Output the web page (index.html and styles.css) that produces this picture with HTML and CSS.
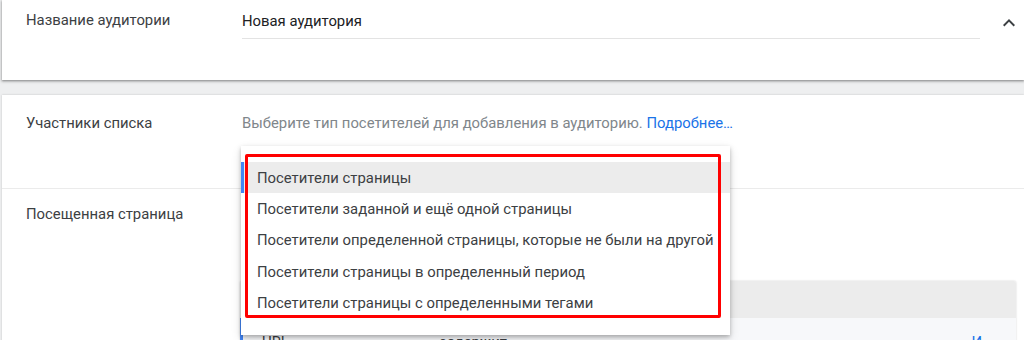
FILE: index.html
```html
<!DOCTYPE html>
<html lang="ru">
<head>
<meta charset="utf-8">
<title>Аудитория</title>
<link rel="stylesheet" href="styles.css">
</head>
<body>
<div class="page">
  <section class="card card-top">
    <div class="row row-name">
      <div class="label">Название аудитории</div>
      <div class="field field-name"><div class="input">Новая аудитория</div></div>
      <div class="chev">
        <svg width="24" height="24" viewBox="0 0 24 24"><path d="M12 8l-6 6 1.41 1.41L12 10.83l4.59 4.58L18 14z" fill="#3c4043"/></svg>
      </div>
    </div>
  </section>
  <section class="card card-main">
    <div class="row row-members">
      <div class="label">Участники списка</div>
      <div class="field">
        <div class="hint">Выберите тип посетителей для добавления в аудиторию. <a class="link">Подробнее…</a></div>
      </div>
    </div>
    <div class="row row-page">
      <div class="label">Посещенная страница</div>
      <div class="field">
        <div class="rule-box">
          <div class="rule-head"></div>
          <div class="rule-body">
            <span class="rule-key">URL</span>
            <span class="rule-caret"></span>
            <span class="rule-op">содержит</span>
            <span class="rule-link">И</span>
          </div>
        </div>
      </div>
    </div>
  </section>
  <ul class="menu">
    <li class="menu-item is-active">Посетители страницы</li>
    <li class="menu-item">Посетители заданной и ещё одной страницы</li>
    <li class="menu-item">Посетители определенной страницы, которые не были на другой</li>
    <li class="menu-item">Посетители страницы в определенный период</li>
    <li class="menu-item">Посетители страницы с определенными тегами</li>
  </ul>
  <div class="annot"></div>
</div>
</body>
</html>
```
FILE: styles.css
```css
* { box-sizing: border-box; }
html, body { margin: 0; padding: 0; }
body {
  background: #eeeff0;
  font-family: Roboto, "Noto Sans", Arial, sans-serif;
  font-size: 14.85px;
  color: #3c4043;
  width: 1024px;
  height: 340px;
  overflow: hidden;
}
.page { position: relative; height: 340px; }

.card {
  background: #fff;
  margin-left: 2px;
}
.card-top {
  height: 80px;
  box-shadow: 0 1px 2px rgba(0,0,0,.35), 0 1px 3px 1px rgba(0,0,0,.12);
}
.card-main {
  margin-top: 15px;
  height: 260px;
  box-shadow: 0 0 2px rgba(0,0,0,.18);
}

.row { display: flex; align-items: flex-start; }
.label {
  width: 240px;
  padding-left: 24px;
  line-height: 20px;
  color: #3c4043;
}

.row-name { padding-top: 10px; }
.field-name {
  width: 738px;
  border-bottom: 1px solid #e3e3e3;
  padding-bottom: 7px;
}
.input {
  line-height: 20px;
  padding-top: 1px;
  color: #202124;
}
.chev { margin-left: 17px; margin-top: 1px; height: 24px; }
.chev svg { display: block; }

.row-members {
  height: 94px;
  padding-top: 18px;
  border-bottom: 1px solid #ebebeb;
}
.hint { line-height: 20px; color: #80868b; }
.link { color: #1a73e8; text-decoration: none; }

.row-page { padding-top: 15px; }
.row-page .field { flex: 1; }
.rule-box {
  margin-top: 77px;
  margin-left: -2px;
  width: 776px;
  border-radius: 2px;
  overflow: hidden;
  box-shadow: 0 0 2px rgba(0,0,0,.2);
}
.rule-head { height: 37px; background: #ececec; }
.rule-body {
  background: #f7f8fa;
  height: 40px;
  border-left: 3px solid #4285f4;
  padding: 14px 0 0 19px;
  display: flex;
  align-items: flex-start;
  line-height: 20px;
  color: #3c4043;
}
.rule-key { width: 124px; }
.rule-caret {
  width: 0; height: 0; margin-top: 8px;
  border-left: 5px solid transparent;
  border-right: 5px solid transparent;
  border-top: 5px solid #5f6368;
}
.rule-op { margin-left: 43px; }
.rule-link { margin-left: auto; margin-right: 34px; color: #1a73e8; }

.menu {
  position: absolute;
  left: 241px;
  top: 146px;
  width: 489px;
  margin: 0;
  padding: 16px 0;
  list-style: none;
  background: #fff;
  box-shadow: 0 2px 4px rgba(0,0,0,.25), 0 4px 10px rgba(0,0,0,.12);
}
.menu-item {
  height: 31.4px;
  display: flex;
  align-items: center;
  padding-left: 16px;
  color: #3c4043;
  white-space: nowrap;
}
.menu-item.is-active {
  background: #ececec;
  border-left: 3px solid #4285f4;
  padding-left: 13px;
}

.annot {
  position: absolute;
  left: 245px;
  top: 154px;
  width: 476px;
  height: 164px;
  border: 3px solid #ff0000;
  border-radius: 2px;
}
```
